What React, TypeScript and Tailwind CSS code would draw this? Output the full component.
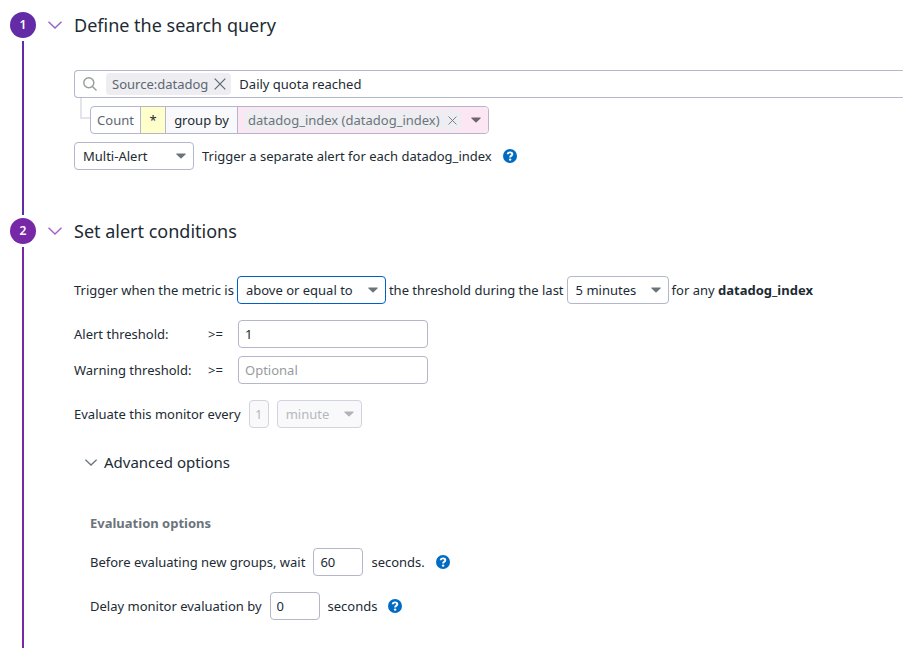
import React, { useState } from "react";
import type { ReactNode } from "react";

function Chevron({ className }: { className: string }) {
  return (
    <svg viewBox="0 0 14 8" fill="none" stroke="currentColor" className={className} aria-hidden="true">
      <path d="M0.5 0.7 L7 7 L13.5 0.7" strokeWidth="1.5" />
    </svg>
  );
}

function Caret({ className }: { className: string }) {
  return (
    <svg viewBox="0 0 10 6" className={`h-[6px] w-[10px] ${className}`} fill="currentColor" aria-hidden="true">
      <path d="M0.9 0.5h8.2c.6 0 .8.6.4 1L5.5 5.3c-.3.3-.7.3-1 0L.5 1.5C.1 1.1.3.5.9.5z" />
    </svg>
  );
}

function Cross({ className }: { className: string }) {
  return (
    <svg viewBox="0 0 12 12" className={className} fill="none" stroke="currentColor" strokeWidth="1.2" aria-hidden="true">
      <path d="M0.7 0.7 L11.3 11.3 M11.3 0.7 L0.7 11.3" />
    </svg>
  );
}

function Help({ label }: { label: string }) {
  return (
    <button type="button" aria-label={label} className="ml-[11px] shrink-0 text-[#006bc2]">
      <svg viewBox="0 0 14 14" className="block size-[14px]" aria-hidden="true">
        <circle cx="7" cy="7" r="7" fill="currentColor" />
        <path
          d="M4.7 5.3C4.8 3.9 5.8 3.4 7 3.4C8.400 3.400 9.300 4.100 9.300 5.200C9.300 6.700 7.100 6.600 7.100 8.600"
          fill="none"
          stroke="#fff"
          strokeWidth="1.9"
        />
        <circle cx="7.1" cy="10.6" r="1.2" fill="#fff" />
      </svg>
    </button>
  );
}

type SelectProps = {
  label: string;
  options: string[];
  width: string;
  tone?: string;
  caret?: string;
  disabled?: boolean;
};

function Select({
  label,
  options,
  width,
  tone = "border-[#b4b6ca] bg-white text-[#1c2b34]",
  caret = "text-[#6c747b]",
  disabled,
}: SelectProps) {
  return (
    <span className={`grid shrink-0 items-center ${width}`}>
      <select
        aria-label={label}
        disabled={disabled}
        className={`col-start-1 row-start-1 h-7 w-full appearance-none rounded-[4px] border pr-6 pl-2 opacity-100 outline-none ${tone}`}
      >
        {options.map((option) => (
          <option key={option}>{option}</option>
        ))}
      </select>
      <Caret className={`pointer-events-none col-start-1 row-start-1 mr-2 justify-self-end ${caret}`} />
    </span>
  );
}

const field = "h-7 rounded-[4px] border border-[#b4b6ca] bg-white px-[6px] outline-none placeholder:text-[#979b9e]";

type StepProps = { number: number; title: string; badge: string; line: string; arrow: string; children: ReactNode };

function Step({ number, title, badge, line, arrow, children }: StepProps) {
  const [open, setOpen] = useState(true);
  return (
    <section className="group flex last:flex-1">
      <div className="flex w-[26px] shrink-0 flex-col items-center gap-[3px] pb-[3px] group-last:pb-0">
        <span
          className={`flex size-[26px] items-center justify-center rounded-full text-[12px] font-semibold text-white ${badge}`}
        >
          {number}
        </span>
        <span className={`w-[2px] flex-1 ${line}`} />
      </div>
      <div className="min-w-0 flex-1 pl-3">
        <h2 className="text-[18px] leading-[26px]">
          <button type="button" aria-expanded={open} onClick={() => setOpen(!open)} className="flex items-center gap-3">
            <Chevron className={`h-2 w-[14px] ${arrow}`} />
            {title}
          </button>
        </h2>
        {open && <div className="pt-8 pl-[26px]">{children}</div>}
      </div>
    </section>
  );
}

export default function App() {
  return (
    <main className="flex min-h-screen flex-col overflow-hidden bg-white pt-3 pl-[10px] font-['Noto_Sans',sans-serif] text-[13px] leading-5 whitespace-nowrap text-[#1c2b34]">
      <Step number={1} title="Define the search query" badge="bg-[#632ca6]" line="bg-[#632ca6]" arrow="text-[#9364cd]">
        <div className="flex h-7 items-center rounded-l-[4px] border border-r-0 border-[#b4b6ca] pb-px pl-2">
          <svg viewBox="0 0 14 14" className="size-[14px] shrink-0 text-[#979b9e]" fill="none" stroke="currentColor" strokeWidth="1.4" aria-hidden="true">
            <circle cx="5.8" cy="5.8" r="5" />
            <path d="M9.4 9.4 L13.5 13.5" />
          </svg>
          <span className="ml-[9px] flex h-[22px] items-center gap-[6px] rounded-[4px] bg-[#ededf2] pr-[5px] pl-[6px] text-[#5c6770]">
            Source:datadog
            <button type="button" aria-label="Remove Source:datadog">
              <Cross className="block size-3" />
            </button>
          </span>
          <input
            aria-label="Search query"
            defaultValue="Daily quota reached"
            className="ml-2 min-w-0 flex-1 bg-transparent outline-none"
          />
        </div>

        <div className="flex pl-[6px]">
          <span className="h-[21px] w-[10px] border-b-2 border-l-2 border-[#e4e4ec]" />
          <div className="mt-2 flex h-7 items-stretch overflow-hidden rounded-[4px] border border-[#b4b6ca]">
            <button type="button" className="w-[49px] text-[#5c6770]">
              Count
            </button>
            <button type="button" aria-label="All events" className="w-[26px] border-x border-[#b4b6ca] bg-[#ffffcc]">
              *
            </button>
            <span className="flex w-[71px] items-center justify-center bg-[#f9f9fb]">group by</span>
            <span className="flex w-[251px] items-center justify-between border-l border-[#b4b6ca] bg-[#fce6f3] pr-[7px] pl-[6px]">
              <span className="flex h-5 items-center gap-2 rounded-[4px] bg-[#ededf2] px-1 text-[#6c747b]">
                datadog_index (datadog_index)
                <button type="button" aria-label="Remove datadog_index">
                  <Cross className="block size-[9px]" />
                </button>
              </span>
              <button type="button" aria-label="Choose a group">
                <Caret className="block text-[#6c6470]" />
              </button>
            </span>
          </div>
        </div>

        <div className="mt-2 flex items-center pb-12">
          <Select label="Alert type" options={["Multi-Alert", "Simple Alert"]} width="w-[120px]" />
          <span className="ml-2">Trigger a separate alert for each datadog_index</span>
          <Help label="About multi alerts" />
        </div>
      </Step>

      <Step number={2} title="Set alert conditions" badge="bg-[#7728a6]" line="bg-[#7728a6]" arrow="text-[#a765cb]">
        <div className="flex items-center gap-[3px]">
          <span>Trigger when the metric is</span>
          <Select
            label="Comparison"
            options={["above or equal to", "above", "below", "below or equal to"]}
            width="w-[149px]"
            tone="border-[#0060c8] bg-white text-[#1c2b34]"
          />
          <span>the threshold during the last</span>
          <Select label="Time window" options={["5 minutes", "10 minutes", "15 minutes"]} width="w-[102px]" />
          <span>
            for any <strong className="font-bold">datadog_index</strong>
          </span>
        </div>

        <div className="mt-4 flex items-center">
          <label htmlFor="alert" className="w-[134px]">
            Alert threshold:
          </label>
          <span className="w-[30px]">&gt;=</span>
          <input id="alert" defaultValue="1" className={`w-[190px] ${field}`} />
        </div>
        <div className="mt-2 flex items-center">
          <label htmlFor="warning" className="w-[134px]">
            Warning threshold:
          </label>
          <span className="w-[30px]">&gt;=</span>
          <input id="warning" placeholder="Optional" className={`w-[190px] ${field}`} />
        </div>

        <div className="mt-4 flex items-center gap-2">
          <label htmlFor="every">Evaluate this monitor every</label>
          <input
            id="every"
            disabled
            defaultValue="1"
            className="h-7 w-5 rounded-[4px] border border-[#d3d3e0] bg-[#f9f9fb] text-center text-[#b4b8bb]"
          />
          <Select
            label="Evaluation unit"
            options={["minute"]}
            width="w-[85px]"
            tone="border-[#d3d3e0] bg-[#f9f9fb] text-[#b4b8bb]"
            caret="text-[#b0b4b8]"
            disabled
          />
        </div>

        <h3 className="mt-[23px] pl-[11px] text-[15px] leading-[22px]">
          <button type="button" aria-expanded="true" className="flex items-center gap-[7px]">
            <Chevron className="h-[7px] w-3 text-[#6c747b]" />
            Advanced options
          </button>
        </h3>

        <div className="pt-10 pb-7 pl-4">
          <h4 className="font-bold text-[#6c747b]">Evaluation options</h4>
          <div className="mt-[15px] flex items-center">
            <label htmlFor="wait">Before evaluating new groups, wait</label>
            <input id="wait" defaultValue="60" className={`mx-2 w-[50px] ${field}`} />
            <span>seconds.</span>
            <Help label="About new groups" />
          </div>
          <div className="mt-4 flex items-center">
            <label htmlFor="delay">Delay monitor evaluation by</label>
            <input id="delay" defaultValue="0" className={`mx-2 w-[50px] ${field}`} />
            <span>seconds</span>
            <Help label="About evaluation delay" />
          </div>
        </div>
      </Step>
    </main>
  );
}
